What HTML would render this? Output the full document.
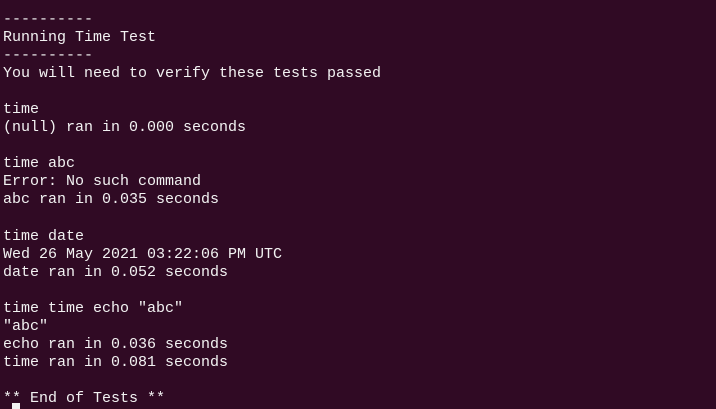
<!DOCTYPE html>
<html><head><style>
html,body{margin:0;padding:0;background:#300a24;width:716px;height:407px;overflow:hidden}
pre{margin:0;position:absolute;left:3px;top:11px;font-family:"Liberation Mono","DejaVu Sans Mono",monospace;font-size:15px;line-height:18.05px;color:#f2f2f2}
.cur{position:absolute;left:12px;top:403px;width:8px;height:6px;background:#f2f2f2}
</style></head><body>
<pre>----------
Running Time Test
----------
You will need to verify these tests passed

time
(null) ran in 0.000 seconds

time abc
Error: No such command
abc ran in 0.035 seconds

time date
Wed 26 May 2021 03:22:06 PM UTC
date ran in 0.052 seconds

time time echo "abc"
"abc"
echo ran in 0.036 seconds
time ran in 0.081 seconds

** End of Tests **</pre>
<div class="cur"></div>
</body></html>
